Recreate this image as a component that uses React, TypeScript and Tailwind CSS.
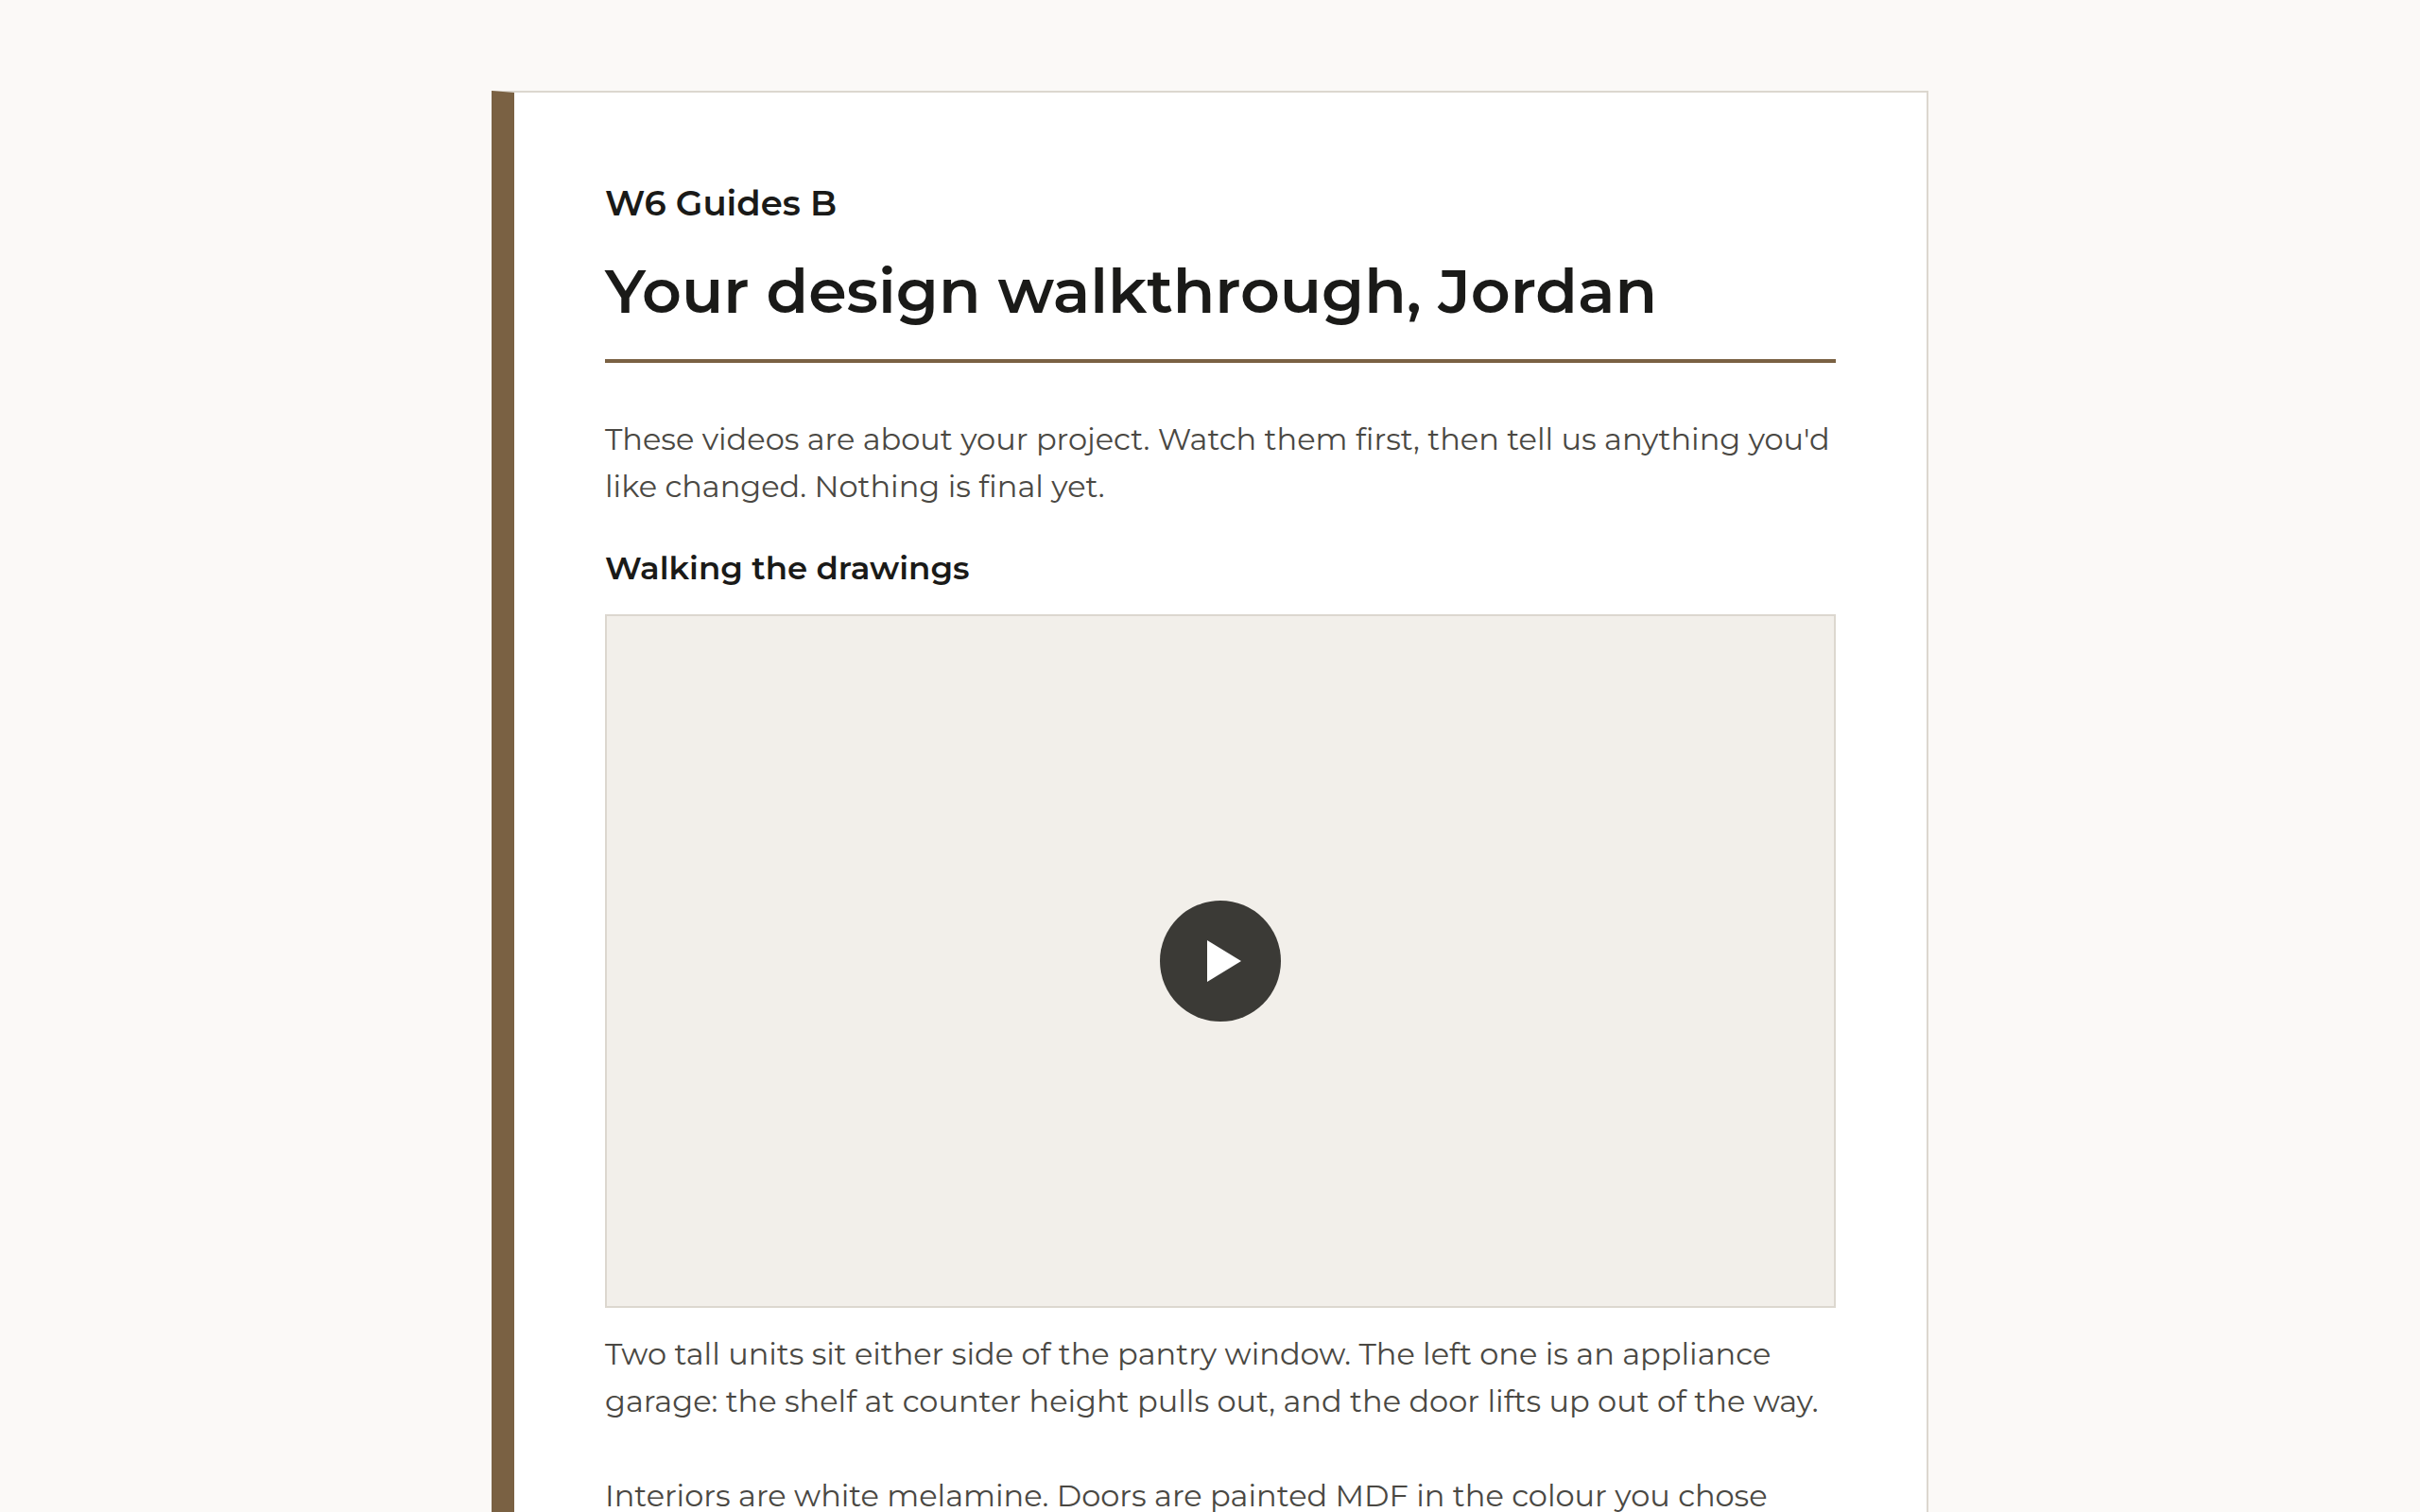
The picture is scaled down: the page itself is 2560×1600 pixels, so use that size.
const walkthrough = {
  company: "W6 Guides B",
  title: "Your design walkthrough, Jordan",
  intro:
    "These videos are about your project. Watch them first, then tell us anything you'd like changed. Nothing is final yet.",
  videos: [
    {
      heading: "Walking the drawings",
      notes: [
        "Two tall units sit either side of the pantry window. The left one is an appliance garage: the shelf at counter height pulls out, and the door lifts up out of the way.",
        "Interiors are white melamine. Doors are painted MDF in the colour you chose",
      ],
    },
  ],
};

interface VideoSectionProps {
  heading: string;
  notes: string[];
}

function VideoSection({ heading, notes }: VideoSectionProps) {
  return (
    <section className="mt-9">
      <h2 className="text-[34px] leading-[50px] font-semibold text-[#1a1a18]">{heading}</h2>
      <div className="mt-6 border-2 border-[#dcd7cf] bg-[#f2efea]">
        <div className="aspect-video flex items-center justify-center">
          <button
            type="button"
            aria-label={`Play ${heading}`}
            className="w-32 h-32 rounded-full bg-[#3b3a36] flex items-center justify-center cursor-pointer"
          >
            <svg viewBox="0 0 36 44" className="w-9 h-11 ml-2 fill-white" aria-hidden="true">
              <path d="M0 0 36 22 0 44Z" />
            </svg>
          </button>
        </div>
      </div>
      <div className="mt-6 flex flex-col gap-[50px]">
        {notes.map((note) => (
          <p key={note}>{note}</p>
        ))}
      </div>
    </section>
  );
}

export default function App() {
  return (
    <div className="min-h-screen bg-[#fbf9f7] px-8 py-24 font-[Montserrat,Inter,sans-serif]">
      <main className="max-w-[1520px] mx-auto bg-white border-2 border-l-24 border-[#dcd7cf] border-l-[#7a6143] p-24 text-[32px] leading-[50px] text-[#4a4843]">
        <header className="border-b-4 border-[#7a6143] pb-8 text-[#1a1a18]">
          <p className="text-[37px] leading-[42px] font-semibold">{walkthrough.company}</p>
          <h1 className="mt-8 text-[65px] leading-[80px] font-semibold">{walkthrough.title}</h1>
        </header>
        <p className="mt-14">{walkthrough.intro}</p>
        {walkthrough.videos.map((video) => (
          <VideoSection key={video.heading} heading={video.heading} notes={video.notes} />
        ))}
      </main>
    </div>
  );
}
